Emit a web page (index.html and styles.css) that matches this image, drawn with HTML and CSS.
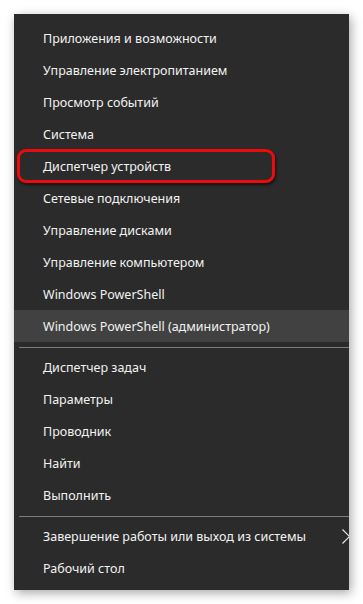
FILE: index.html
```html
<!DOCTYPE html>
<html lang="ru">
<head>
<meta charset="utf-8">
<link rel="stylesheet" href="styles.css">
</head>
<body>
<div class="menu">
  <div class="item">Приложения и возможности</div>
  <div class="item">Управление электропитанием</div>
  <div class="item">Просмотр событий</div>
  <div class="item">Система</div>
  <div class="item">Диспетчер устройств</div>
  <div class="item">Сетевые подключения</div>
  <div class="item">Управление дисками</div>
  <div class="item">Управление компьютером</div>
  <div class="item">Windows PowerShell</div>
  <div class="item active">Windows PowerShell (администратор)</div>
  <div class="sep"></div>
  <div class="item">Диспетчер задач</div>
  <div class="item">Параметры</div>
  <div class="item">Проводник</div>
  <div class="item">Найти</div>
  <div class="item">Выполнить</div>
  <div class="sep"></div>
  <div class="item sub">Завершение работы или выход из системы
    <svg class="chev" width="8" height="15" viewBox="0 0 8 15"><polyline points="0.5,0.5 7.5,7.5 0.5,14.5" fill="none" stroke="#e8e8e8" stroke-width="1.2"/></svg>
  </div>
  <div class="item">Рабочий стол</div>
  <div class="mark"></div>
</div>
</body>
</html>
```
FILE: styles.css
```css
html, body {
  margin: 0;
  padding: 0;
  background: #ffffff;
}
body {
  padding: 14px 14px 14px 14px;
  font-family: "Noto Sans", "Open Sans", sans-serif;
}
.menu {
  position: relative;
  width: 335px;
  height: 576px;
  box-sizing: border-box;
  background: #2b2b2b;
  padding: 8px 0 6px 0;
  box-shadow: 2px 3px 10px rgba(0, 0, 0, 0.35);
  display: flex;
  flex-direction: column;
  overflow: hidden;
}
.item {
  position: relative;
  height: 32px;
  line-height: 34px;
  padding-left: 29px;
  color: #f2f2f2;
  font-size: 12.5px;
  white-space: nowrap;
}
.item.active {
  background: #414141;
}
.sep {
  height: 1px;
  margin: 5px 0 3px 5px;
  background: #7c7c7c;
}
.chev {
  position: absolute;
  left: 328px;
  top: 9px;
}
.mark {
  position: absolute;
  left: 3px;
  top: 135px;
  width: 252px;
  height: 28px;
  border: 3px solid #ee0a0a;
  border-radius: 9px;
  box-shadow: 1px 2px 3px rgba(0, 0, 0, 0.6);
}
```
